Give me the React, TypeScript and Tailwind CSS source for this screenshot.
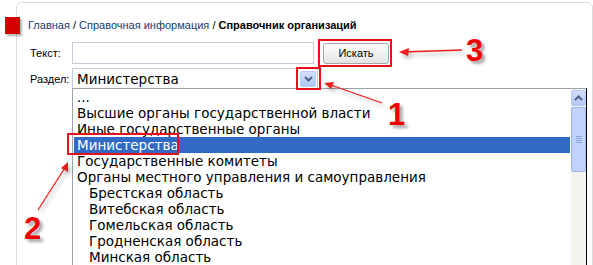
import { ReactNode } from "react";

const ITEMS: { label: string; indent?: boolean; selected?: boolean }[] = [
  { label: "..." },
  { label: "Высшие органы государственной власти" },
  { label: "Иные государственные органы" },
  { label: "Министерства", selected: true },
  { label: "Государственные комитеты" },
  { label: "Органы местного управления и самоуправления" },
  { label: "Брестская область", indent: true },
  { label: "Витебская область", indent: true },
  { label: "Гомельская область", indent: true },
  { label: "Гродненская область", indent: true },
  { label: "Минская область", indent: true },
];

function Chevron({ up = false }: { up?: boolean }) {
  return (
    <svg width="9" height="6" viewBox="0 0 9 6" className={up ? "rotate-180" : ""}>
      <path d="M1 1 L4.5 4.5 L8 1" fill="none" stroke="#4d6185" strokeWidth="2" />
    </svg>
  );
}

function Digit({ children, className }: { children: ReactNode; className: string }) {
  return (
    <span
      className={`absolute text-[31px] leading-none font-bold text-[#f00000] [font-family:'Liberation_Sans',Arial,sans-serif] [text-shadow:3px_3px_3px_rgba(0,0,0,0.35)] ${className}`}
    >
      {children}
    </span>
  );
}

export default function App() {
  return (
    <div className="relative w-[593px] h-[265px] overflow-hidden bg-white [font-family:'Liberation_Sans',Arial,sans-serif] text-black">
      {/* panel */}
      <div className="ml-[16px] mt-[2px] h-[320px] border border-[#dcdcdc] rounded-[5px] pl-[11px] pt-[16px]">
        <div className="text-[11px] leading-[13px] text-[#1b3a6b] whitespace-nowrap">
          Главная <span className="text-black">/</span> Справочная информация{" "}
          <span className="text-black">/</span>{" "}
          <b className="text-black">Справочник организаций</b>
        </div>

        <div className="mt-[10px] flex items-start">
          <span className="w-[44px] pl-[2px] pt-[5px] text-[11px] leading-[13px]">Текст:</span>
          <div className="w-[242px] h-[22px] border border-[#c4ccd9] bg-white" />
          <button className="ml-[9px] mt-[1px] w-[66px] h-[21px] rounded-[3px] border border-[#a7a7a7] bg-gradient-to-b from-white to-[#e4e4e4] text-[11px] text-black">
            Искать
          </button>
        </div>

        <div className="mt-[4px] flex items-start">
          <span className="w-[44px] pl-[2px] pt-[5px] text-[11px] leading-[13px]">Раздел:</span>
          <div className="w-[246px] h-[21px] border border-[#c4ccd9] bg-white flex items-center justify-between pl-[4px] pr-[1px]">
            <span className="text-[13.5px] [font-family:'DejaVu_Sans',sans-serif] leading-[16px]">Министерства</span>
            <span className="w-[16px] h-[16px] rounded-[2px] border border-[#b7caf5] bg-gradient-to-b from-[#d2defc] to-[#b3c7f6] flex items-center justify-center">
              <Chevron />
            </span>
          </div>
        </div>
      </div>

      {/* open dropdown list */}
      <div className="absolute left-[72px] top-[88px] w-[515px] h-[200px] bg-white border-l border-t border-[#9ea4ad] border-r border-r-black flex">
        <div className="flex-1 pl-[1px] pr-[1px] [font-family:'DejaVu_Sans',sans-serif] text-[13.5px]">
          {ITEMS.map((it) => (
            <div
              key={it.label}
              className={`h-[16px] leading-[16px] whitespace-nowrap ${it.indent ? "pl-[15px]" : "pl-[3px]"} ${
                it.selected ? "bg-[#316ac5] text-white" : ""
              }`}
            >
              {it.label}
            </div>
          ))}
        </div>
        <div className="w-[15px] bg-[#f4f3ee] flex flex-col pt-[1px]">
          <div className="h-[16px] rounded-[2px] border border-[#b7caf5] bg-gradient-to-b from-[#d2defc] to-[#b3c7f6] flex items-center justify-center">
            <Chevron up />
          </div>
          <div className="mt-[1px] h-[65px] rounded-[2px] border border-[#9fb4ea] bg-[#c1d3fb] flex flex-col items-center justify-center gap-[1px]">
            <span className="w-[6px] h-[1px] bg-[#8ea6e0]" />
            <span className="w-[6px] h-[1px] bg-[#8ea6e0]" />
            <span className="w-[6px] h-[1px] bg-[#8ea6e0]" />
            <span className="w-[6px] h-[1px] bg-[#8ea6e0]" />
          </div>
        </div>
      </div>

      {/* red marker */}
      <span className="absolute left-[5px] top-[17px] w-[15px] h-[17px] bg-[#d40000] shadow-[2px_2px_2px_rgba(0,0,0,0.3)]" />

      {/* annotation boxes */}
      <span className="absolute left-[318px] top-[39px] w-[74px] h-[28px] border-2 border-[#e8101a]" />
      <span className="absolute left-[296px] top-[67px] w-[25px] h-[23px] border-2 border-[#e8101a]" />
      <span className="absolute left-[67px] top-[133px] w-[112px] h-[22px] border-2 border-[#e8101a]" />

      {/* arrows */}
      <svg className="absolute inset-0 pointer-events-none [filter:drop-shadow(2px_3px_2px_rgba(0,0,0,0.3))]" width="593" height="265">
        <g stroke="#f01c1c" strokeWidth="1.3" fill="#f01c1c">
          <line x1="462" y1="50" x2="402" y2="52" />
          <path d="M399 52 L409 48 L408 56 Z" stroke="none" />
          <line x1="382" y1="103" x2="328" y2="84" />
          <path d="M324 83 L334 82 L331 89 Z" stroke="none" />
          <line x1="38" y1="210" x2="66" y2="166" />
          <path d="M68 162 L68 172 L61 168 Z" stroke="none" />
        </g>
      </svg>

      <Digit className="left-[466px] top-[35px]">3</Digit>
      <Digit className="left-[388px] top-[99px]">1</Digit>
      <Digit className="left-[24px] top-[213px]">2</Digit>
    </div>
  );
}
